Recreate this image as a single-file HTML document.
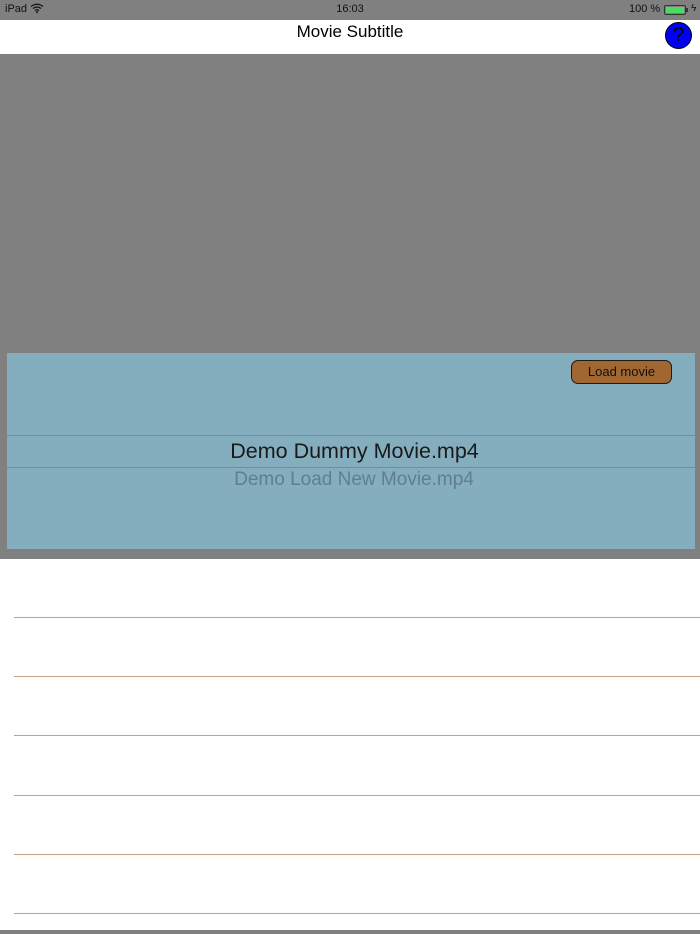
<!DOCTYPE html>
<html><head><style>
body{margin:0;width:700px;height:934px;position:relative;background:#fff;font-family:"Liberation Sans",sans-serif;overflow:hidden}
div{position:absolute}
.l{left:14px;right:0;height:1px;background:#c4a288}
</style></head><body>
<div style="left:0;top:0;width:700px;height:20px;background:#808080"></div>
<div style="left:5px;top:3px;font-size:11px;color:#111">iPad
<svg width="14" height="10" viewBox="0 0 14 10" style="vertical-align:-1px"><path d="M1 3.5Q7 -1 13 3.5M3 5.5Q7 2.5 11 5.5M5 7.5Q7 6 9 7.5" stroke="#111" stroke-width="1.3" fill="none"/><circle cx="7" cy="9" r="1" fill="#111"/></svg></div>
<div style="left:0;width:700px;top:3px;text-align:center;font-size:11px;color:#111">16:03</div>
<div style="left:629px;top:3px;font-size:11px;color:#111">100 %</div>
<div style="left:664px;top:5px;width:20px;height:8px;border:1px solid #333;border-radius:2px"><div style="left:1px;top:1px;width:18px;height:6px;background:#4cd964"></div></div>
<div style="left:686px;top:8px;width:2px;height:4px;background:#333"></div>
<div style="left:691px;top:3px;font-size:10px;color:#111">ϟ</div>
<div style="left:0;top:20px;width:700px;height:34px;background:#fff"></div>
<div style="left:0;width:700px;top:22px;text-align:center;font-size:17px;color:#000">Movie Subtitle</div>
<div style="left:665px;top:22px;width:25px;height:25px;border:1px solid #000;border-radius:50%;background:#0000f5;text-align:center;font-size:20px;line-height:25px;color:#000">?</div>
<div style="left:0;top:54px;width:700px;height:505px;background:#808080"></div>
<div style="left:7px;top:353px;width:688px;height:196px;background:#84aebe"></div>
<div style="left:571px;top:360px;width:99px;height:22px;border:1.5px solid #1a1a1a;border-radius:7px;background:#a06830;text-align:center;line-height:22px;font-size:13px;color:#111">Load movie</div>
<div style="left:7px;top:435px;width:688px;height:1px;background:#6a8fa0"></div>
<div style="left:7px;top:467px;width:688px;height:1px;background:#6a8fa0"></div>
<div style="left:0;width:709px;top:439px;text-align:center;font-size:21.5px;color:#1a1a1a">Demo Dummy Movie.mp4</div>
<div style="left:0;width:708px;top:469px;text-align:center;font-size:19px;color:#5f7f8e">Demo Load New Movie.mp4</div>
<div class="l" style="top:617px"></div>
<div class="l" style="top:676px"></div>
<div class="l" style="top:735px"></div>
<div class="l" style="top:795px"></div>
<div class="l" style="top:854px"></div>
<div class="l" style="top:913px"></div>
<div style="left:0;top:930px;width:700px;height:4px;background:#808080"></div>
</body></html>
